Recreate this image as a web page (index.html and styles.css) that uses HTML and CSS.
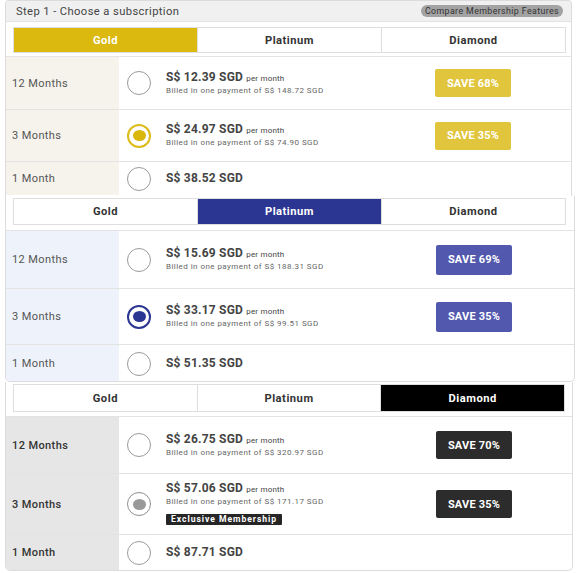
FILE: index.html
```html
<!DOCTYPE html>
<html>
<head>
<meta charset="utf-8">
<link rel="stylesheet" href="styles.css">
</head>
<body>
<div class="card card-gold">
  <div class="header">
    <span class="step">Step 1 - Choose a subscription</span>
    <span class="compare">Compare Membership Features</span>
  </div>
  <div class="tabs tabs-1">
    <div class="tab active">Gold</div>
    <div class="tab">Platinum</div>
    <div class="tab">Diamond</div>
  </div>
  <div class="rows">
    <div class="row r-a">
      <div class="term">12 Months</div>
      <div class="opt">
        <span class="radio"></span>
        <div class="info">
          <div class="price">S$ 12.39 SGD <span class="per">per month</span></div>
          <div class="billed">Billed in one payment of S$ 148.72 SGD</div>
        </div>
        <span class="save">SAVE 68%</span>
      </div>
    </div>
    <div class="row r-b">
      <div class="term">3 Months</div>
      <div class="opt">
        <span class="radio on"></span>
        <div class="info">
          <div class="price">S$ 24.97 SGD <span class="per">per month</span></div>
          <div class="billed">Billed in one payment of S$ 74.90 SGD</div>
        </div>
        <span class="save">SAVE 35%</span>
      </div>
    </div>
    <div class="row r-c">
      <div class="term">1 Month</div>
      <div class="opt">
        <span class="radio"></span>
        <div class="info">
          <div class="price">S$ 38.52 SGD</div>
        </div>
      </div>
    </div>
  </div>
</div>

<div class="card card-plat">
  <div class="tabs tabs-2">
    <div class="tab">Gold</div>
    <div class="tab active">Platinum</div>
    <div class="tab">Diamond</div>
  </div>
  <div class="rows">
    <div class="row r-a">
      <div class="term">12 Months</div>
      <div class="opt">
        <span class="radio"></span>
        <div class="info">
          <div class="price">S$ 15.69 SGD <span class="per">per month</span></div>
          <div class="billed">Billed in one payment of S$ 188.31 SGD</div>
        </div>
        <span class="save">SAVE 69%</span>
      </div>
    </div>
    <div class="row r-b">
      <div class="term">3 Months</div>
      <div class="opt">
        <span class="radio on"></span>
        <div class="info">
          <div class="price">S$ 33.17 SGD <span class="per">per month</span></div>
          <div class="billed">Billed in one payment of S$ 99.51 SGD</div>
        </div>
        <span class="save">SAVE 35%</span>
      </div>
    </div>
    <div class="row r-c">
      <div class="term">1 Month</div>
      <div class="opt">
        <span class="radio"></span>
        <div class="info">
          <div class="price">S$ 51.35 SGD</div>
        </div>
      </div>
    </div>
  </div>
</div>

<div class="card card-dia">
  <div class="tabs tabs-3">
    <div class="tab">Gold</div>
    <div class="tab">Platinum</div>
    <div class="tab active">Diamond</div>
  </div>
  <div class="rows">
    <div class="row r-a">
      <div class="term">12 Months</div>
      <div class="opt">
        <span class="radio"></span>
        <div class="info">
          <div class="price">S$ 26.75 SGD <span class="per">per month</span></div>
          <div class="billed">Billed in one payment of S$ 320.97 SGD</div>
        </div>
        <span class="save">SAVE 70%</span>
      </div>
    </div>
    <div class="row r-b">
      <div class="term">3 Months</div>
      <div class="opt">
        <span class="radio on"></span>
        <div class="info">
          <div class="price">S$ 57.06 SGD <span class="per">per month</span></div>
          <div class="billed">Billed in one payment of S$ 171.17 SGD</div>
          <div class="badge">Exclusive Membership</div>
        </div>
        <span class="save">SAVE 35%</span>
      </div>
    </div>
    <div class="row r-c">
      <div class="term">1 Month</div>
      <div class="opt">
        <span class="radio"></span>
        <div class="info">
          <div class="price">S$ 87.71 SGD</div>
        </div>
      </div>
    </div>
  </div>
</div>
</body>
</html>
```

FILE: styles.css
```css
* { box-sizing: border-box; }
body {
  margin: 0;
  background: #fff;
  font-family: Roboto, "Liberation Sans", Arial, sans-serif;
  color: #444;
}
.card {
  margin-left: 5px;
  width: 567px;
  border: 1px solid #dcdcdc;
  border-radius: 4px;
  background: #fff;
  overflow: hidden;
}
.card-gold { height: 196px; border-bottom: none; border-radius: 4px 4px 0 0; }
.card-plat { width: 570px; height: 186px; border-top: none; border-radius: 0 0 5px 5px; }
.card-dia { width: 568px; height: 189px; border-top: none; border-radius: 0 0 5px 5px; }

.header {
  height: 21px;
  background: #f0f0f0;
  border-bottom: 1px solid #e2e2e2;
  display: flex;
  align-items: center;
  justify-content: space-between;
  padding: 0 8px 0 10px;
}
.step { font-size: 11.2px; letter-spacing: 0.4px; color: #444; }
.compare {
  background: #a3a3a3;
  color: #333;
  font-size: 8.8px;
  letter-spacing: 0.4px;
  height: 12px;
  line-height: 12px;
  padding: 0 4px;
  border-radius: 6px;
}
.tabs {
  display: flex;
  margin: 5px 5px 0 7px;
  height: 26px;
  border: 1px solid #dedede;
}
.tabs-2 { margin: 2px 8px 0 7px; height: 27px; }
.tabs-3 { margin: 2px 7px 0 7px; height: 28px; }
.tab {
  flex: 1;
  display: flex;
  align-items: center;
  justify-content: center;
  font-size: 11.2px;
  letter-spacing: 0.5px;
  font-weight: 700;
  color: #333;
  border-left: 1px solid #dedede;
}
.tab:first-child { border-left: none; }
.card-gold .tab.active { background: #dbb90e; color: #fff; }
.card-plat .tab.active { background: #2b3592; color: #fff; }
.card-dia .tab.active { background: #000; color: #fff; }

.rows { margin-top: 3px; }
.tabs-2 + .rows { margin-top: 5px; }
.tabs-3 + .rows { margin-top: 4px; }
.row {
  display: flex;
  border-top: 1px solid #e3e3e3;
}
.card-gold .r-a { height: 53px; }
.card-gold .r-b { height: 52px; }
.card-gold .r-c { height: 34px; }
.card-plat .r-a { height: 58px; }
.card-plat .r-b { height: 56px; }
.card-plat .r-c { height: 38px; }
.card-dia .r-a { height: 57px; }
.card-dia .r-b { height: 61px; }
.card-dia .r-c { height: 36px; }

.term {
  width: 113px;
  flex: none;
  display: flex;
  align-items: center;
  padding-left: 6px;
  font-size: 11px;
  letter-spacing: 0.4px;
  color: #555;
}
.card-gold .term { background: #f5f3ec; }
.card-plat .term { background: #eef3fb; }
.card-dia .term { background: #e6e6e6; color: #333; font-weight: 500; }

.opt {
  flex: 1;
  display: flex;
  align-items: center;
  padding-left: 8px;
}
.radio {
  width: 24px;
  height: 24px;
  flex: none;
  border-radius: 50%;
  border: 1.3px solid #9a9a9a;
  background: #fff;
  display: flex;
  align-items: center;
  justify-content: center;
}
.radio.on::after {
  content: "";
  width: 13px;
  height: 11px;
  border-radius: 50%;
}
.card-gold .radio.on { border: 2px solid #dbbc1a; }
.card-gold .radio.on::after { background: #d9b70d; }
.card-plat .radio.on { border: 2px solid #2b3592; }
.card-plat .radio.on::after { background: #2b3592; }
.card-dia .radio.on { border: 1.5px solid #8e8e8e; }
.card-dia .radio.on::after { background: #999; }

.info { margin-left: 15px; }
.price {
  font-size: 12px;
  letter-spacing: 0.2px;
  font-weight: 700;
  color: #444;
  line-height: 13px;
}
.per { font-size: 8px; letter-spacing: 0.2px; font-weight: 400; color: #444; }
.billed {
  font-size: 8px;
  letter-spacing: 0.45px;
  color: #666;
  line-height: 11px;
}
.badge {
  display: inline-block;
  margin-top: 2px;
  background: #262626;
  color: #fff;
  font-size: 8.6px;
  font-weight: 700;
  letter-spacing: 0.95px;
  height: 11px;
  line-height: 11px;
  padding: 0 5px;
  border-radius: 1px;
}
.save {
  margin-left: auto;
  margin-right: 60px;
  width: 76px;
  height: 28px;
  display: flex;
  align-items: center;
  justify-content: center;
  color: #fff;
  font-size: 11px;
  letter-spacing: 0.2px;
  font-weight: 700;
  border-radius: 2px;
}
.card-gold .save { background: #e1c53d; }
.card-plat .save { background: #5158ae; height: 30px; margin-right: 62px; }
.card-dia .save { background: #2c2c2c; }
```
